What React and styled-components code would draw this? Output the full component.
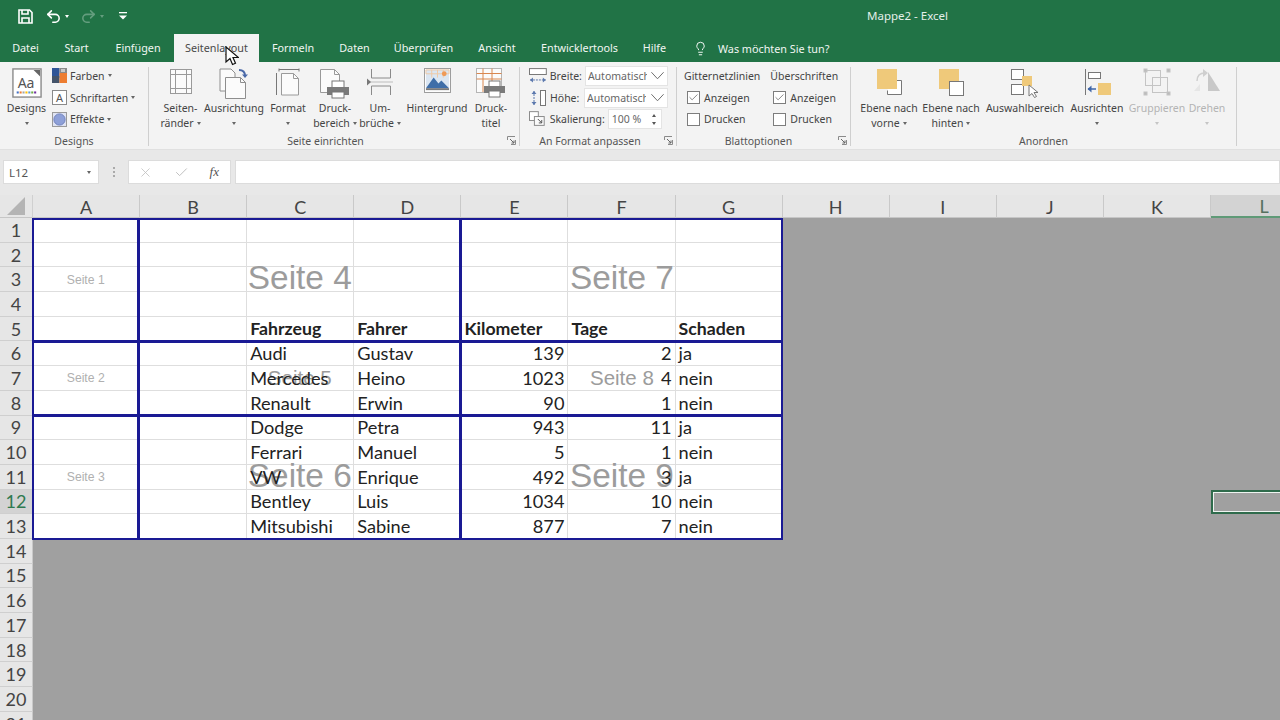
import styled, { createGlobalStyle } from "styled-components";
import { Lightbulb, Undo2, Redo2, X, Check } from "lucide-react";

const UI_FONT = `"Noto Sans", "Open Sans", sans-serif`;
const CELL_FONT = `Lato, "Noto Sans", sans-serif`;
const COL_W = 107.1;
const ROW_H = 24.69;

const columns = ["A", "B", "C", "D", "E", "F", "G", "H", "I", "J", "K", "L"];

const sheetRows = {
  5: { C: "Fahrzeug", D: "Fahrer", E: "Kilometer", F: "Tage", G: "Schaden" },
  6: { C: "Audi", D: "Gustav", E: 139, F: 2, G: "ja" },
  7: { C: "Mercedes", D: "Heino", E: 1023, F: 4, G: "nein" },
  8: { C: "Renault", D: "Erwin", E: 90, F: 1, G: "nein" },
  9: { C: "Dodge", D: "Petra", E: 943, F: 11, G: "ja" },
  10: { C: "Ferrari", D: "Manuel", E: 5, F: 1, G: "nein" },
  11: { C: "VW", D: "Enrique", E: 492, F: 3, G: "ja" },
  12: { C: "Bentley", D: "Luis", E: 1034, F: 10, G: "nein" },
  13: { C: "Mitsubishi", D: "Sabine", E: 877, F: 7, G: "nein" },
};

const pages = [
  { n: 1, size: 12.2 },
  { n: 4, size: 33.4 },
  { n: 7, size: 33.4 },
  { n: 2, size: 12.2 },
  { n: 5, size: 20.5 },
  { n: 8, size: 20.5 },
  { n: 3, size: 12.2 },
  { n: 6, size: 33.4 },
  { n: 9, size: 33.4 },
];

const tabs = [
  "Datei",
  "Start",
  "Einfügen",
  "Seitenlayout",
  "Formeln",
  "Daten",
  "Überprüfen",
  "Ansicht",
  "Entwicklertools",
  "Hilfe",
];

const GlobalStyle = createGlobalStyle`
  html, body {
    margin: 0;
    padding: 0;
    background: #e6e6e6;
    overflow: hidden;
  }
  * {
    box-sizing: border-box;
  }
`;

const Window = styled.div`
  position: relative;
  width: 1280px;
  height: 720px;
  overflow: hidden;
  display: flex;
  flex-direction: column;
  font-family: ${UI_FONT};
  background: #e6e6e6;
`;

const TitleBar = styled.div`
  height: 34px;
  flex: none;
  background: #217346;
  color: #fff;
  display: flex;
  align-items: center;
  padding: 0 332px 2px 18px;
`;

const QuickAccess = styled.div`
  display: flex;
  align-items: center;
`;

const QuickSlot = styled.span`
  display: flex;
  align-items: center;
  margin-left: ${(p) => p.$gap || 0}px;
  opacity: ${(p) => (p.$dim ? 0.3 : 1)};
`;

const TinyCaret = styled.span`
  display: block;
  margin-left: ${(p) => p.$gap ?? 3}px;
  border-left: 2.5px solid transparent;
  border-right: 2.5px solid transparent;
  border-top: 3px solid ${(p) => p.$color || "#666"};
`;

const DocTitle = styled.div`
  margin-left: auto;
  margin-top: -1px;
  font-size: 11.5px;
  color: #e4efe9;
`;

const TabRow = styled.div`
  height: 28px;
  flex: none;
  background: #217346;
  display: flex;
  align-items: stretch;
  color: #f1f6f3;
  font-size: 10.8px;
`;

const Tab = styled.div`
  width: ${(p) => p.$w}px;
  display: flex;
  align-items: center;
  justify-content: center;
  padding-bottom: 1px;
  background: ${(p) => (p.$active ? "#f3f3f3" : "transparent")};
  color: ${(p) => (p.$active ? "#4a4a4a" : "inherit")};
`;

const TellMe = styled.div`
  margin-left: 14px;
  display: flex;
  align-items: center;
  gap: 10px;
`;

const Ribbon = styled.div`
  height: 88px;
  flex: none;
  background: #f3f3f3;
  display: flex;
  border-bottom: 1px solid #e0e0e0;
  color: #444;
  font-size: 10.5px;
`;

const Group = styled.section`
  position: relative;
  width: ${(p) => p.$w}px;
  flex: none;
  display: flex;
  flex-direction: column;
`;

const GroupBody = styled.div`
  height: 71px;
  display: flex;
  padding: ${(p) => p.$pad || "4px 0 0 0"};
`;

const GroupLabel = styled.div`
  height: 16px;
  text-align: center;
  line-height: 16px;
  font-size: 10.5px;
  color: #555;
  padding-right: ${(p) => p.$shift || 0}px;
`;

const Launcher = styled.svg`
  position: absolute;
  right: 3px;
  bottom: 4px;
  width: 9px;
  height: 9px;
`;

const Separator = styled.div`
  width: 1px;
  flex: none;
  margin: 5px 0 3px;
  background: #cfcfcf;
`;

const BigButton = styled.div`
  width: ${(p) => p.$w}px;
  flex: none;
  display: flex;
  flex-direction: column;
  align-items: center;
  color: ${(p) => (p.$off ? "#b4b4b4" : "#444")};
  white-space: nowrap;
`;

const BigIcon = styled.div`
  height: 35px;
  padding-top: 2px;
  display: flex;
  align-items: flex-start;
  justify-content: center;
`;

const BigLine = styled.div`
  height: 15px;
  line-height: 15px;
  display: flex;
  align-items: center;
  justify-content: center;
`;

const SmallColumn = styled.div`
  width: ${(p) => (p.$w ? `${p.$w}px` : "auto")};
  display: flex;
  flex-direction: column;
  margin-top: -1px;
  margin-left: ${(p) => p.$left || 0}px;
`;

const SmallRow = styled.div`
  height: 21.7px;
  display: flex;
  align-items: center;
  gap: ${(p) => p.$gap ?? 3}px;
  white-space: nowrap;
`;

const Dropdown = styled.div`
  width: 84px;
  height: 20px;
  margin-left: auto;
  background: #fff;
  border: 1px solid #e4e4e4;
  display: flex;
  align-items: center;
  padding: 0 2px 0 2px;
  justify-content: space-between;
  color: #666;
`;

const DropText = styled.span`
  width: 59px;
  overflow: hidden;
  white-space: nowrap;
`;

const Spinner = styled.div`
  width: 55px;
  height: 20px;
  margin-left: auto;
  margin-right: 6px;
  background: #fff;
  border: 1px solid #e4e4e4;
  display: flex;
  align-items: center;
  justify-content: space-between;
  padding: 0 5px 0 3px;
  color: #666;
`;

const SpinArrows = styled.span`
  display: flex;
  flex-direction: column;
  gap: 5px;
`;

const SpinUp = styled.span`
  display: block;
  border-left: 2.5px solid transparent;
  border-right: 2.5px solid transparent;
  border-bottom: 3px solid #555;
`;

const CheckBox = styled.span`
  width: 13px;
  height: 13px;
  margin: 0 4px 0 3px;
  background: #fff;
  border: 1px solid #7d7d7d;
  display: flex;
  align-items: center;
  justify-content: center;
  color: #555;
`;

const FormulaArea = styled.div`
  height: 45px;
  flex: none;
  padding: 10px 0 11px 3px;
  display: flex;
  align-items: stretch;
  background: #e8e8e8;
`;

const InputBox = styled.div`
  background: #fff;
  border: 1px solid #dcdcdc;
  display: flex;
  align-items: center;
`;

const NameBox = styled(InputBox)`
  width: 96px;
  padding: 0 7px 0 5px;
  justify-content: space-between;
  color: #555;
  font-size: 11.5px;
`;

const Dots = styled.div`
  width: 29px;
  display: flex;
  flex-direction: column;
  align-items: center;
  justify-content: center;
  gap: 2px;
`;

const Dot = styled.span`
  width: 2px;
  height: 2px;
  background: #aaa;
`;

const FormulaButtons = styled(InputBox)`
  width: 103px;
  justify-content: space-between;
  padding: 0 11px 0 9px;
  color: #c0c0c0;
`;

const FxMark = styled.span`
  font-family: "Liberation Serif", serif;
  font-style: italic;
  font-size: 13px;
  color: #555;
`;

const FormulaInput = styled(InputBox)`
  flex: 1;
  margin-left: 4px;
`;

const Sheet = styled.div`
  position: relative;
  flex: none;
  display: grid;
  grid-template-columns: 33px repeat(12, ${COL_W}px);
  grid-template-rows: 23px repeat(21, ${ROW_H}px);
  font-family: ${CELL_FONT};
  background: #a0a0a0;
`;

const Corner = styled.div`
  background: #e6e6e6;
  border-right: 1px solid #d0d0d0;
  border-bottom: 1px solid #c6c6c6;
  display: flex;
  align-items: center;
  justify-content: center;
`;

const ColHead = styled.div`
  display: flex;
  align-items: center;
  justify-content: center;
  padding-top: 1px;
  font-size: 18px;
  color: ${(p) => (p.$active ? "#55705f" : "#444")};
  background: ${(p) => (p.$active ? "#d3d3d3" : "#e6e6e6")};
  border-right: 1px solid #c9c9c9;
  border-bottom: ${(p) => (p.$active ? "2px solid #5f9a77" : "1px solid #c6c6c6")};
`;

const RowHead = styled.div`
  display: flex;
  align-items: center;
  justify-content: center;
  font-size: 18px;
  color: ${(p) => (p.$active ? "#2f7a50" : "#444")};
  background: ${(p) => (p.$active ? "#d3d3d3" : "#e6e6e6")};
  border-right: 1px solid #c9c9c9;
  border-bottom: 1px solid #cfcfcf;
`;

const Cell = styled.div`
  display: flex;
  align-items: center;
  justify-content: ${(p) => (p.$num ? "flex-end" : "flex-start")};
  padding: 0 3px 0 3px;
  font-size: ${(p) => (p.$head ? 17.7 : 18.2)}px;
  font-weight: ${(p) => (p.$head ? 700 : 400)};
  color: #222;
  white-space: nowrap;
  background: ${(p) => (p.$inPrint ? "#fff" : "#a0a0a0")};
  border-right: ${(p) => (p.$inPrint ? "1px solid #dedede" : "none")};
  border-bottom: ${(p) => (p.$inPrint ? "1px solid #dedede" : "none")};
  box-shadow: ${(p) =>
    p.$selected
      ? "inset 0 0 0 2px #2f6b4c, inset 0 0 0 3px #eef4f0"
      : "none"};
`;

const CellText = styled.span`
  position: relative;
  z-index: 2;
`;

// page break view: blue frames with the watermark, laid over the cells
const PageOverlay = styled.div`
  position: absolute;
  left: 32.2px;
  top: 22.5px;
  width: 751.3px;
  height: 322.5px;
  z-index: 1;
  display: grid;
  grid-template-columns: 106.1px 322px 1fr;
  grid-template-rows: 123px 74px 1fr;
  border: 2px solid #1a1a94;
  pointer-events: none;
`;

const PageFrame = styled.div`
  display: flex;
  align-items: center;
  justify-content: center;
  border-right: ${(p) => (p.$lastCol ? "none" : "3px solid #1a1a94")};
  border-bottom: ${(p) => (p.$lastRow ? "none" : "3px solid #1a1a94")};
`;

const Watermark = styled.span`
  font-family: "Liberation Sans", Arial, sans-serif;
  color: ${(p) => (p.$size < 15 ? "#b0b0b0" : "#9c9c9c")};
  font-size: ${(p) => p.$size}px;
  margin-top: ${(p) => (p.$size > 30 ? -3 : 0)}px;
  white-space: nowrap;
`;

const MouseCursor = styled.svg`
  position: absolute;
  left: 225px;
  top: 46px;
  width: 14px;
  height: 20px;
  z-index: 5;
`;

function SaveIcon() {
  return (
    <svg width="15" height="15" viewBox="0 0 15 15" fill="none" stroke="#fff" strokeWidth="1.6">
      <path d="M1 1h10.5L14 3.5V14H1z" />
      <path d="M4 1v4h6V1M4 14V9h7v5" />
    </svg>
  );
}

function FarbenIcon() {
  return (
    <svg width="15" height="15" viewBox="0 0 15 15">
      <rect width="7.5" height="8" fill="#2f5597" />
      <rect x="7.5" width="7.5" height="5" fill="#8a8a8a" />
      <rect x="7.5" y="5" width="7.5" height="5" fill="#ed7d31" />
      <rect y="8" width="7.5" height="7" fill="#44546a" />
      <rect x="7.5" y="10" width="7.5" height="5" fill="#ed7d31" />
      <rect x="9" y="1" width="4" height="3" fill="#c9c9c9" />
    </svg>
  );
}

function FontsIcon() {
  return (
    <svg width="15" height="15" viewBox="0 0 15 15">
      <rect x=".5" y=".5" width="14" height="14" fill="#fff" stroke="#8a8a8a" />
      <text x="7.5" y="12" textAnchor="middle" fontSize="11" fontFamily="Noto Sans" fill="#555">
        A
      </text>
    </svg>
  );
}

function EffectsIcon() {
  return (
    <svg width="15" height="15" viewBox="0 0 15 15">
      <rect x=".5" y=".5" width="14" height="14" fill="#dfe3f3" stroke="#9a9a9a" />
      <circle cx="7.5" cy="7.5" r="5.6" fill="#8ea0d8" stroke="#7183bd" />
    </svg>
  );
}

function DesignsIcon() {
  return (
    <svg width="30" height="30" viewBox="0 0 32 32">
      <rect x="1" y="1" width="30" height="30" fill="#fff" stroke="#8c8c8c" strokeWidth="1.5" />
      <path d="M23 2h7v7z" fill="#666" />
      <text x="15" y="21" textAnchor="middle" fontSize="15" fontFamily="Noto Sans" fill="#555">
        Aa
      </text>
      {["#4472c4", "#ed7d31", "#a5a5a5", "#ffc000", "#5b9bd5", "#70ad47", "#7030a0"].map((c, i) => (
        <rect key={c} x={5 + i * 3.1} y="25" width="2.2" height="2.2" fill={c} />
      ))}
    </svg>
  );
}

function MarginsIcon() {
  return (
    <svg width="24" height="27" viewBox="0 0 24 27" fill="none" stroke="#9a9a9a">
      <rect x="1.5" y="1.5" width="21" height="24" fill="#fbfbfb" />
      <path d="M6.5 1.5v24M17.5 1.5v24M1.5 6.5h21M1.5 20.5h21" />
    </svg>
  );
}

function OrientationIcon() {
  return (
    <svg width="30" height="31" viewBox="0 0 30 31" fill="none" stroke="#8e8e8e">
      <path d="M1 1h11l4 4v18H1z" fill="#fbfbfb" />
      <path d="M6.500 9.500h15l5 5v16h-20z" fill="#fbfbfb" />
      <path d="M21.500 9.500v5h5" />
      <path d="M20 2c4 0 6 2 6 6" stroke="#4a69a8" strokeWidth="2" />
      <path d="M23 6.500l3 3.500 3-3.500z" fill="#4a69a8" stroke="none" />
    </svg>
  );
}

function FormatIcon() {
  return (
    <svg width="26" height="28" viewBox="0 0 26 28" fill="none" stroke="#9a9a9a">
      <path d="M4 1.500h20M4 .500v3M24 .500v3M1.500 5v22" stroke="#777" />
      <path d="M6.500 5.500h12l5 5v16.500h-17z" fill="#fbfbfb" />
      <path d="M18.500 5.500v5h5" />
    </svg>
  );
}

function PrintAreaIcon() {
  return (
    <svg width="32" height="31" viewBox="0 0 32 31" fill="none" stroke="#9a9a9a">
      <path d="M1.500 1.500h14l5 5v18h-19z" fill="#fbfbfb" />
      <path d="M15.500 1.500v5h5" />
      <rect x="13" y="13" width="12" height="7" fill="#fff" stroke="#777" />
      <rect x="8" y="19" width="22" height="8" fill="#7a7a7a" stroke="none" />
      <rect x="13" y="24" width="12" height="6" fill="#fff" stroke="#777" />
    </svg>
  );
}

function BreaksIcon() {
  return (
    <svg width="28" height="28" viewBox="0 0 28 28" fill="none" stroke="#8a8a8a">
      <path d="M5.500 1v9h19V1M5.500 27v-9h19v9" />
      <path d="M1 14h26" stroke="#bdbdbd" />
      <path d="M1 10.500l4 3.500-4 3.500z" fill="#777" stroke="none" />
    </svg>
  );
}

function BackgroundIcon() {
  return (
    <svg width="27" height="25" viewBox="0 0 28 26">
      <rect x=".5" y=".5" width="27" height="25" fill="#fdfdfd" stroke="#9a9a9a" />
      <rect x="2" y="2" width="24" height="19" fill="#dbe6f2" />
      <path d="M2 2h24v4H2zM8 2v8M14 2v8M20 2v8" fill="none" stroke="#efc9a6" />
      <path d="M2 21l8-11 5 6 3-3 8 8z" fill="#3f6ea8" />
      <circle cx="21" cy="6" r="2.500" fill="#ef9a57" />
      <rect x="2" y="21" width="24" height="2" fill="#7a7a7a" />
    </svg>
  );
}

function PrintTitlesIcon() {
  return (
    <svg width="30" height="30" viewBox="0 0 30 30" fill="none">
      <rect x=".5" y=".5" width="25" height="24" fill="#fbfbfb" stroke="#b5b5b5" />
      <path d="M.5 5.500h25M.5 11h25M7 .500V24M16 .500V24" stroke="#d9874f" />
      <rect x="13" y="13" width="11" height="6" fill="#fff" stroke="#777" />
      <rect x="8" y="18" width="21" height="7" fill="#7a7a7a" />
      <rect x="13" y="23" width="11" height="6" fill="#fff" stroke="#777" />
    </svg>
  );
}

function WidthIcon() {
  return (
    <svg width="18" height="16" viewBox="0 0 18 16" fill="none" stroke="#777">
      <rect x=".5" y=".5" width="17" height="6" fill="#fff" />
      <path d="M1 12h16" stroke="#5b78ad" strokeDasharray="2 1" />
      <path d="M1 12l3-2.500v5zM17 12l-3-2.500v5z" fill="#5b78ad" stroke="none" />
    </svg>
  );
}

function HeightIcon() {
  return (
    <svg width="18" height="16" viewBox="0 0 18 16" fill="none" stroke="#777">
      <rect x="11.500" y=".5" width="5" height="15" fill="#fff" />
      <path d="M5 1v14" stroke="#5b78ad" strokeDasharray="2 1" />
      <path d="M5 1L2.500 4h5zM5 15l-2.500-3h5z" fill="#5b78ad" stroke="none" />
    </svg>
  );
}

function ScaleIcon() {
  return (
    <svg width="18" height="16" viewBox="0 0 18 16" fill="none" stroke="#8a8a8a">
      <rect x=".5" y=".5" width="9" height="9" fill="#fff" />
      <rect x="5.500" y="5.500" width="10" height="9" fill="#fafafa" />
      <path d="M9 8l4 4M13 9v3h-3" stroke="#555" />
    </svg>
  );
}

function ForwardIcon() {
  return (
    <svg width="27" height="28" viewBox="0 0 27 28" fill="none">
      <path d="M13 12.500h12.500v14h-14v-4" fill="#fff" stroke="#777" />
      <rect x="1" y="1" width="20" height="20" fill="#efc97a" />
    </svg>
  );
}

function BackwardIcon() {
  return (
    <svg width="27" height="28" viewBox="0 0 27 28" fill="none">
      <rect x="1" y="1" width="20" height="20" fill="#efc97a" />
      <rect x="11.500" y="13.500" width="14" height="14" fill="#fff" stroke="#777" />
    </svg>
  );
}

function SelectionIcon() {
  return (
    <svg width="28" height="30" viewBox="0 0 28 30" fill="none">
      <rect x=".5" y="1.500" width="12" height="10" fill="#fff" stroke="#777" />
      <rect x=".5" y="16.500" width="12" height="10" fill="#fff" stroke="#777" />
      <rect x="11" y="8" width="10" height="10" fill="#efc97a" />
      <path d="M18 17v11l3-2.500 2.500 4 2-1-2.500-4h4z" fill="#fff" stroke="#777" />
    </svg>
  );
}

function AlignIcon() {
  return (
    <svg width="27" height="28" viewBox="0 0 27 28" fill="none">
      <path d="M1.500 1v26" stroke="#777" />
      <rect x="4.500" y="4.500" width="12" height="6" fill="#fff" stroke="#777" />
      <rect x="14" y="15" width="13" height="12" fill="#efc97a" />
      <path d="M4 21h8" stroke="#3f66a8" strokeWidth="1.500" />
      <path d="M3.500 21l4-3.500v7z" fill="#3f66a8" />
    </svg>
  );
}

function GroupIcon() {
  return (
    <svg width="28" height="28" viewBox="0 0 28 28" fill="none" stroke="#c4c4c4">
      <rect x="2.500" y="2.500" width="15" height="15" />
      <rect x="9.500" y="9.500" width="15" height="15" />
      <rect x="1" y="1" width="3" height="3" fill="#bbb" />
      <rect x="24" y="1" width="3" height="3" fill="#bbb" />
      <rect x="1" y="24" width="3" height="3" fill="#bbb" />
      <rect x="24" y="24" width="3" height="3" fill="#bbb" />
    </svg>
  );
}

function RotateIcon() {
  return (
    <svg width="28" height="26" viewBox="0 0 28 26" fill="none">
      <path d="M15 4l12 19H15z" fill="#c8c8c8" />
      <path d="M4 13c0-5 3-8 8-8" stroke="#cfcfcf" strokeWidth="1.500" />
      <path d="M10 1l5 4-5 4z" fill="#cfcfcf" />
      <path d="M1 23l6-7v7z" fill="#e6e6e6" />
    </svg>
  );
}

function LauncherIcon() {
  return (
    <Launcher viewBox="0 0 9 9" fill="none" stroke="#8a8a8a">
      <path d="M8.500 4v4.500H4M.5 4V.5H8" />
      <path d="M3 3l4 4M7 4.500V7H4.500" stroke="#666" />
    </Launcher>
  );
}

function Big({ w, icon, lines, caret, off }) {
  const caretColor = off ? "#c4c4c4" : "#666";
  return (
    <BigButton $w={w} $off={off}>
      <BigIcon>{icon}</BigIcon>
      {lines.map((line, i) => (
        <BigLine key={line}>
          {line}
          {caret && lines.length > 1 && i === 1 && <TinyCaret $color={caretColor} />}
        </BigLine>
      ))}
      {caret && lines.length === 1 && (
        <BigLine>
          <TinyCaret $gap={0} $color={caretColor} />
        </BigLine>
      )}
    </BigButton>
  );
}

function ThemeRow({ icon, label }) {
  return (
    <SmallRow>
      {icon}
      {label}
      <TinyCaret $gap={0} />
    </SmallRow>
  );
}

function ScaleDrop({ icon, label }) {
  return (
    <SmallRow>
      {icon}
      {label}
      <Dropdown>
        <DropText>Automatisch</DropText>
        <svg width="15" height="9" viewBox="0 0 16 9" fill="none" stroke="#666">
          <path d="M1.500 1l6.500 7 6.500-7" />
        </svg>
      </Dropdown>
    </SmallRow>
  );
}

function SheetOption({ label, checked }) {
  return (
    <SmallRow $gap={0}>
      <CheckBox>{checked && <Check size={11} strokeWidth={1.5} />}</CheckBox>
      {label}
    </SmallRow>
  );
}

export default function App() {
  const tabWidths = [51, 51, 72, 85, 68, 55, 83, 64, 101, 49];

  return (
    <Window>
      <GlobalStyle />
      <TitleBar>
        <QuickAccess>
          <SaveIcon />
          <QuickSlot $gap={12}>
            <Undo2 size={17} color="#fff" strokeWidth={2.2} />
            <TinyCaret $color="#fff" />
          </QuickSlot>
          <QuickSlot $gap={11} $dim>
            <Redo2 size={17} color="#fff" strokeWidth={2.2} />
            <TinyCaret $color="#fff" />
          </QuickSlot>
          <QuickSlot $gap={15}>
            <svg width="8" height="8" viewBox="0 0 8 8" fill="#fff">
              <rect width="8" height="1.300" />
              <path d="M0 3.500h8L4 7.500z" />
            </svg>
          </QuickSlot>
        </QuickAccess>
        <DocTitle>Mappe2 - Excel</DocTitle>
      </TitleBar>

      <TabRow>
        {tabs.map((t, i) => (
          <Tab key={t} $w={tabWidths[i]} $active={t === "Seitenlayout"}>
            {t}
          </Tab>
        ))}
        <TellMe>
          <Lightbulb size={15} color="#fff" strokeWidth={1.5} />
          Was möchten Sie tun?
        </TellMe>
      </TabRow>

      <Ribbon>
        <Group $w={148}>
          <GroupBody $pad="4px 0 0 1px">
            <Big w={51} icon={<DesignsIcon />} lines={["Designs"]} caret />
            <SmallColumn>
              <ThemeRow icon={<FarbenIcon />} label="Farben" />
              <ThemeRow icon={<FontsIcon />} label="Schriftarten" />
              <ThemeRow icon={<EffectsIcon />} label="Effekte" />
            </SmallColumn>
          </GroupBody>
          <GroupLabel>Designs</GroupLabel>
        </Group>
        <Separator />

        <Group $w={370}>
          <GroupBody $pad="4px 0 0 9px">
            <Big w={45} icon={<MarginsIcon />} lines={["Seiten-", "ränder"]} caret />
            <Big w={62} icon={<OrientationIcon />} lines={["Ausrichtung"]} caret />
            <Big w={46} icon={<FormatIcon />} lines={["Format"]} caret />
            <Big w={48} icon={<PrintAreaIcon />} lines={["Druck-", "bereich"]} caret />
            <Big w={42} icon={<BreaksIcon />} lines={["Um-", "brüche"]} caret />
            <Big w={72} icon={<BackgroundIcon />} lines={["Hintergrund"]} />
            <Big w={36} icon={<PrintTitlesIcon />} lines={["Druck-", "titel"]} />
          </GroupBody>
          <GroupLabel $shift={17}>Seite einrichten</GroupLabel>
          <LauncherIcon />
        </Group>
        <Separator />

        <Group $w={156}>
          <GroupBody $pad="4px 0 0 9px">
            <SmallColumn $w={139}>
              <ScaleDrop icon={<WidthIcon />} label="Breite:" />
              <ScaleDrop icon={<HeightIcon />} label="Höhe:" />
              <SmallRow>
                <ScaleIcon />
                Skalierung:
                <Spinner>
                  100 %
                  <SpinArrows>
                    <SpinUp />
                    <TinyCaret $gap={0} $color="#555" />
                  </SpinArrows>
                </Spinner>
              </SmallRow>
            </SmallColumn>
          </GroupBody>
          <GroupLabel $shift={16}>An Format anpassen</GroupLabel>
          <LauncherIcon />
        </Group>
        <Separator />

        <Group $w={173}>
          <GroupBody $pad="4px 0 0 7px">
            <SmallColumn>
              <SmallRow>Gitternetzlinien</SmallRow>
              <SheetOption label="Anzeigen" checked />
              <SheetOption label="Drucken" />
            </SmallColumn>
            <SmallColumn $left={10}>
              <SmallRow>Überschriften</SmallRow>
              <SheetOption label="Anzeigen" checked />
              <SheetOption label="Drucken" />
            </SmallColumn>
          </GroupBody>
          <GroupLabel $shift={10}>Blattoptionen</GroupLabel>
          <LauncherIcon />
        </Group>
        <Separator />

        <Group $w={385}>
          <GroupBody $pad="4px 0 0 8px">
            <Big w={60} icon={<ForwardIcon />} lines={["Ebene nach", "vorne"]} caret />
            <Big w={64} icon={<BackwardIcon />} lines={["Ebene nach", "hinten"]} caret />
            <Big w={84} icon={<SelectionIcon />} lines={["Auswahlbereich"]} />
            <Big w={60} icon={<AlignIcon />} lines={["Ausrichten"]} caret />
            <Big w={60} icon={<GroupIcon />} lines={["Gruppieren"]} caret off />
            <Big w={40} icon={<RotateIcon />} lines={["Drehen"]} caret off />
          </GroupBody>
          <GroupLabel>Anordnen</GroupLabel>
        </Group>
        <Separator />
      </Ribbon>

      <FormulaArea>
        <NameBox>
          L12
          <TinyCaret $color="#666" />
        </NameBox>
        <Dots>
          <Dot />
          <Dot />
          <Dot />
        </Dots>
        <FormulaButtons>
          <X size={15} strokeWidth={1.3} />
          <Check size={15} strokeWidth={1.6} />
          <FxMark>fx</FxMark>
        </FormulaButtons>
        <FormulaInput />
      </FormulaArea>

      <Sheet>
        <Corner>
          <svg width="18" height="18" viewBox="0 0 18 18">
            <path d="M18 0v18H0z" fill="#b4b4b4" />
          </svg>
        </Corner>
        {columns.map((c) => (
          <ColHead key={c} $active={c === "L"}>
            {c}
          </ColHead>
        ))}
        {Array.from({ length: 21 }, (_, i) => i + 1).flatMap((r) => [
          <RowHead key={`r${r}`} $active={r === 12}>
            {r}
          </RowHead>,
          ...columns.map((c, ci) => {
            const value = sheetRows[r]?.[c];
            return (
              <Cell
                key={`${c}${r}`}
                $inPrint={ci < 7 && r < 14}
                $num={typeof value === "number"}
                $head={r === 5}
                $selected={c === "L" && r === 12}
              >
                {value !== undefined && <CellText>{value}</CellText>}
              </Cell>
            );
          }),
        ])}
        <PageOverlay>
          {pages.map((p, i) => (
            <PageFrame key={p.n} $lastCol={i % 3 === 2} $lastRow={i >= 6}>
              <Watermark $size={p.size}>Seite {p.n}</Watermark>
            </PageFrame>
          ))}
        </PageOverlay>
      </Sheet>

      <MouseCursor viewBox="0 0 14 20">
        <path d="M1 1v15l4-3.500 2.500 6 3-1.300-2.500-5.700h5.500z" fill="#fff" stroke="#111" strokeWidth="1.200" />
      </MouseCursor>
    </Window>
  );
}
